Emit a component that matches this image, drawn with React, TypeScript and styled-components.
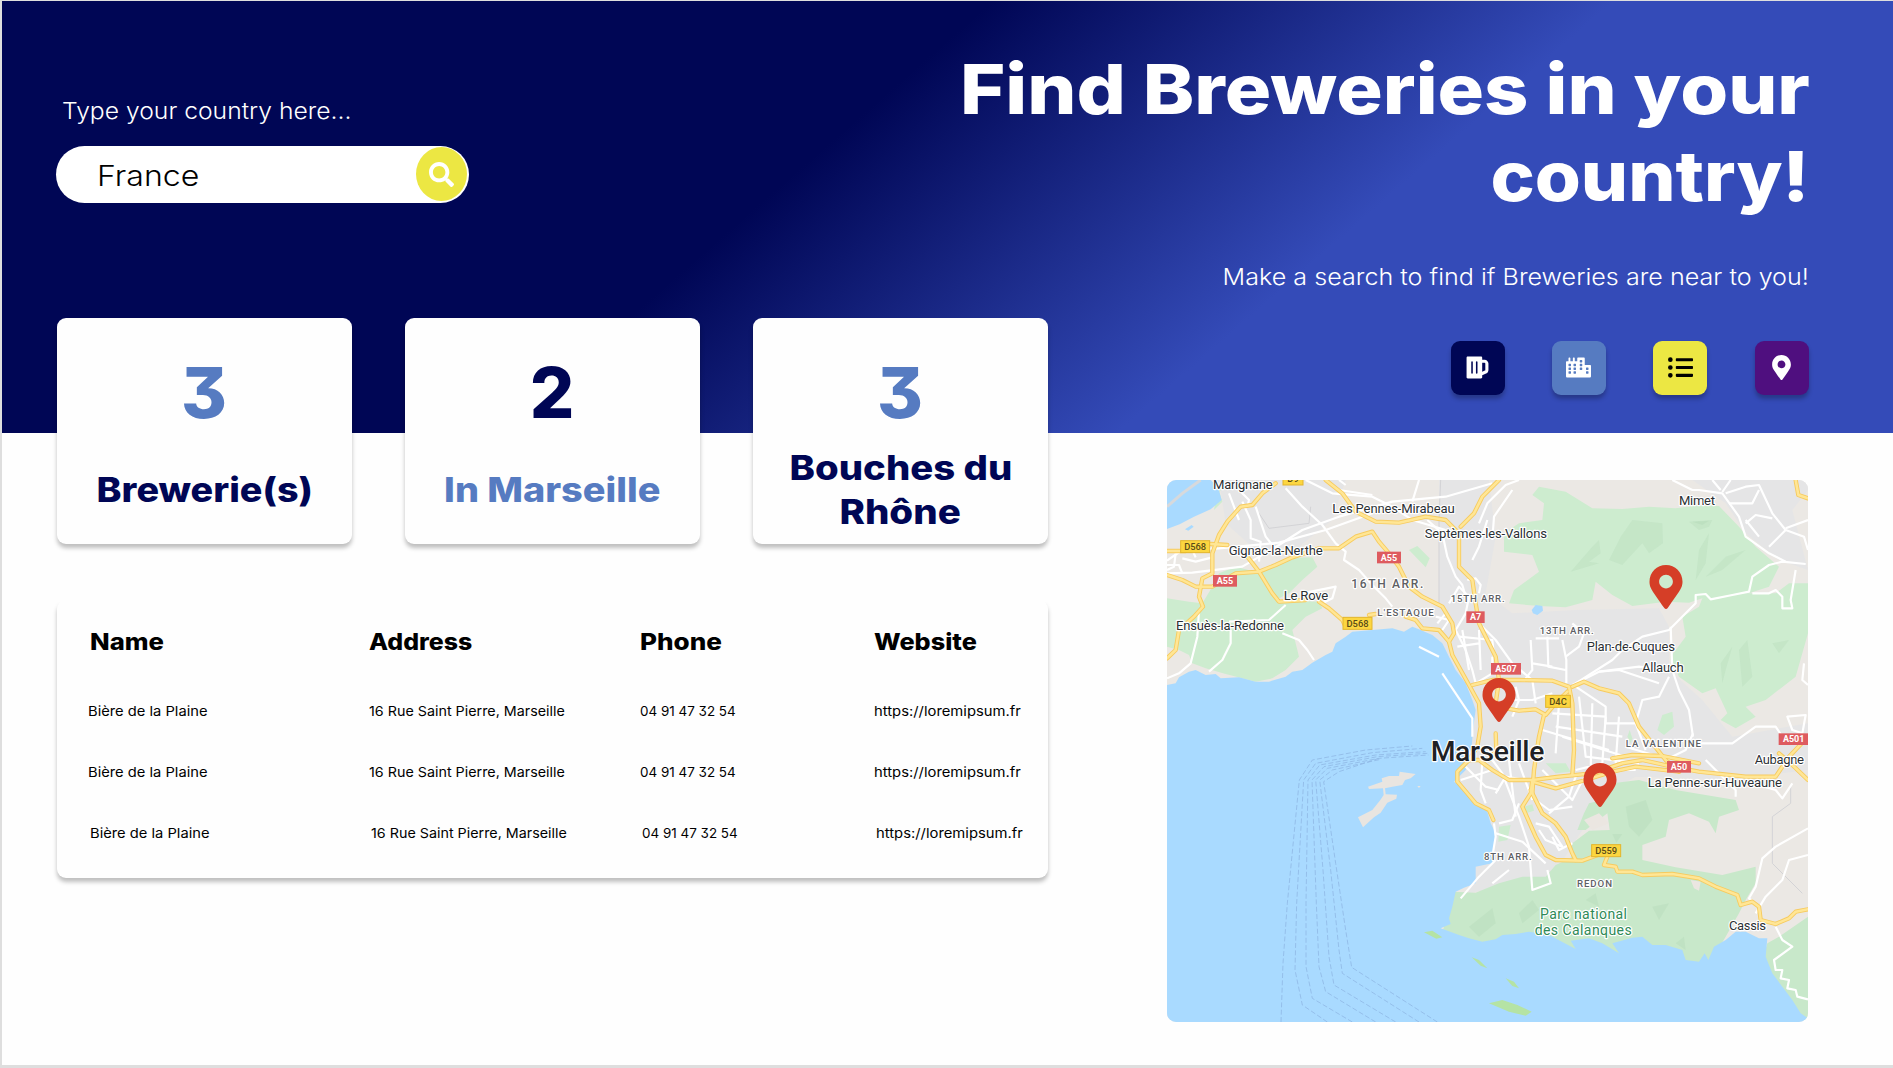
import React from "react";
import styled, { createGlobalStyle } from "styled-components";
import { FaBeer, FaCity, FaListUl, FaMapMarkerAlt, FaSearch } from "react-icons/fa";

const navy = "#000655";
const blue = "#567bc1";
const yellow = "#ece743";
const purple = "#4f0f7f";

const GlobalStyle = createGlobalStyle`
  *, *::before, *::after { box-sizing: border-box; }
  body {
    margin: 0;
    background: #fefefe;
    font-family: Inter, "Open Sans", sans-serif;
    font-feature-settings: "cv09";
    overflow: hidden;
  }
`;

const Page = styled.div`
  display: flex;
  flex-direction: column;
  height: 1068px;
  border: solid #dedede;
  border-width: 1px 0 3px 2px;
`;

const Hero = styled.header`
  display: flex;
  justify-content: space-between;
  flex: none;
  height: 432px;
  padding: 0 84.5px 0 54px;
  color: #fff;
  background: linear-gradient(139deg, ${navy} 41.5%, #344bb8 67.5%);
`;

const Wide = styled.span<{ $stretch: number; $origin?: string }>`
  display: inline-block;
  transform: scaleX(${(p) => p.$stretch});
  transform-origin: ${(p) => p.$origin ?? "left"} center;
  white-space: nowrap;
`;

const SearchForm = styled.form`
  display: flex;
  flex-direction: column;
  width: 413px;
  padding-top: 95px;
`;

const SearchLabel = styled.label`
  padding-left: 6px;
  font-size: 23px;
  font-weight: 300;
  line-height: 30px;
`;

const SearchBox = styled.div`
  display: flex;
  align-items: center;
  justify-content: space-between;
  height: 57px;
  margin-top: 19.5px;
  padding: 0 2px 0 40.5px;
  border-radius: 29px;
  background: #fff;
`;

const SearchInput = styled.input`
  width: 250px;
  padding: 3px 0 0;
  border: 0;
  outline: 0;
  background: none;
  color: #000;
  font: 300 28.5px Inter, sans-serif;
  transform: scaleX(1.125);
  transform-origin: left center;
`;

const SearchButton = styled.button`
  display: grid;
  place-items: center;
  width: 51px;
  height: 54px;
  padding: 0;
  border: 0;
  border-radius: 50%;
  background: ${yellow};
  color: #fff;
  font-size: 25px;
`;

const Intro = styled.div`
  display: flex;
  flex-direction: column;
  align-items: flex-end;
  text-align: right;
`;

const Title = styled.h1`
  display: flex;
  flex-direction: column;
  align-items: flex-end;
  margin: 45px -1px 0 0;
  font-size: 69px;
  font-weight: 800;
  line-height: 87px;
`;

const Tagline = styled.p`
  margin: 42px 0 0;
  font-size: 23px;
  font-weight: 300;
  line-height: 30px;
`;

const Shortcuts = styled.nav`
  display: flex;
  gap: 47.3px;
  margin-top: 48.5px;
`;

const Shortcut = styled.button<{ $bg: string; $fg?: string }>`
  display: grid;
  place-items: center;
  width: 54px;
  height: 54px;
  padding: 0;
  border: 0;
  border-radius: 9px;
  background: ${(p) => p.$bg};
  color: ${(p) => p.$fg ?? "#fff"};
  font-size: 25px;
  box-shadow: 0 4px 4px rgba(0, 0, 0, 0.25);
`;

const Content = styled.main`
  display: flex;
  justify-content: space-between;
  padding: 0 85px 0 55px;
`;

const Results = styled.section`
  width: 991px;
  margin-top: -115px;
`;

const Stats = styled.div`
  display: grid;
  grid-template-columns: repeat(3, 295px);
  justify-content: space-between;
`;

const StatCard = styled.article`
  display: flex;
  flex-direction: column;
  align-items: center;
  height: 226px;
  padding-top: 32px;
  border-radius: 9px;
  background: #fefefe;
  box-shadow: 0 4px 4px rgba(0, 0, 0, 0.25);
`;

const StatValue = styled.div<{ $color: string }>`
  margin-right: 1px;
  color: ${(p) => p.$color};
  font-size: 70px;
  font-weight: 800;
  line-height: 85px;
`;

const StatLabel = styled.div<{ $color: string }>`
  display: flex;
  flex: 1;
  flex-direction: column;
  align-items: center;
  justify-content: center;
  color: ${(p) => p.$color};
  font-size: 33.7px;
  font-weight: 800;
  line-height: 43.5px;
`;

const TableCard = styled.div`
  height: 278px;
  margin-top: 56px;
  padding: 27px 0 0 30.5px;
  border-radius: 9px;
  background: #fefefe;
  box-shadow: 0 4px 4px rgba(0, 0, 0, 0.25);
  clip-path: inset(2px -10px -10px -10px);
`;

const HeadRow = styled.div`
  display: grid;
  grid-template-columns: 281px 271px 234px 1fr;
  margin-bottom: 23px;
`;

const HeadCell = styled.div<{ $shift?: number }>`
  padding-left: ${(p) => p.$shift ?? 0}px;
  font-size: 23px;
  font-weight: 800;
  line-height: 30px;
`;

const Row = styled.div<{ $indent?: boolean }>`
  display: grid;
  grid-template-columns: 281px 271px 234px 1fr;
  align-items: center;
  height: 61.2px;
  padding-left: ${(p) => (p.$indent ? 2.7 : 0)}px;
`;

const Cell = styled.div`
  font-size: 13.5px;
  line-height: 20px;
`;

const MapPanel = styled.section`
  position: relative;
  width: 641px;
  height: 542px;
  margin-top: 47px;
  overflow: hidden;
  border-radius: 9px;
`;

const MapDrawing = styled.svg`
  display: block;
  width: 100%;
  height: 100%;
  font-family: Roboto, sans-serif;
`;

const Pin = styled(FaMapMarkerAlt)<{ $x: number; $y: number }>`
  position: absolute;
  left: ${(p) => p.$x - 22}px;
  top: ${(p) => p.$y}px;
  width: 44px;
  height: 44px;
  color: #d53e27;
`;

const brewery = {
  name: "Bière de la Plaine",
  address: "16 Rue Saint Pierre, Marseille",
  phone: "04 91 47 32 54",
  website: "https://loremipsum.fr",
};
const breweries = [brewery, brewery, brewery];

const sea =
  "M24 645 50 640 60 622 90 605 110 600 140 615 170 612 185 625 240 622 290 635 330 635 380 620 400 605 430 600 460 578 500 555 520 545 530 520 560 500 580 485 640 480 700 475 735 485 760 470 780 478 820 495 850 520 870 560 890 600 920 640 940 690 950 720 943 770 938 830 925 870 920 900 885 935 905 950 940 985 985 1025 995 1060 1010 1090 1005 1130 1002 1165 1000 1180 960 1188 950 1190 950 1240 915 1253 890 1265 880 1310 870 1345 875 1362 845 1375 900 1395 930 1405 970 1415 1010 1408 1030 1395 1070 1392 1110 1385 1170 1395 1250 1437 1235 1412 1290 1405 1330 1420 1380 1450 1360 1420 1420 1403 1450 1400 1480 1425 1520 1425 1570 1440 1580 1470 1620 1475 1637 1450 1648 1470 1665 1430 1700 1410 1730 1385 1760 1385 1800 1405 1825 1405 1820 1460 1840 1510 1870 1550 1900 1590 1925 1630 1947 1645V1656H24Z";

const parks = [
  "M24 385 90 395 130 400 160 350 180 310 230 290 290 305 330 290 380 265 460 262 475 290 430 330 390 370 350 390 480 395 490 415 440 440 400 480 410 520 420 560 380 600 340 625 290 635 200 612 140 595 100 580 90 555 60 540 24 530Z",
  "M1140 50 1220 65 1300 115 1390 117 1470 110 1550 115 1630 105 1680 108 1740 170 1790 230 1860 290 1830 350 1770 370 1690 385 1630 385 1590 398 1520 395 1420 408 1360 375 1310 335 1300 390 1220 412 1140 408 1050 400 1065 360 1140 305 1120 255 1035 245 1035 190 1080 160 1150 150 1155 100 1120 75Z",
  "M1947 340V490L1910 620 1820 690 1760 710 1790 740 1730 775 1685 750 1705 730 1670 655 1630 670 1560 620 1535 560 1580 500 1570 440 1620 410 1630 385 1730 370 1850 370 1890 340Z",
  "M1510 735 1540 725 1545 770 1515 795 1495 780Z",
  "M1405 800 1412 780 1420 805 1415 820Z",
  "M750 240 775 228 812 265 800 292Z",
  "M1160 880 1220 880 1235 905 1190 910Z",
  "M1020 1070 1055 1065 1045 1110 1018 1115Z",
  "M1095 1010 1120 1003 1125 1022 1100 1030Z",
  "M205 30 180 62 190 95 165 120 172 80Z",
];

const calanques = [
  "M850 1390 880 1265 950 1268 1020 1240 1090 1220 1160 1220 1190 1185 1235 1165 1240 1120 1290 1082 1352 1080 1345 1030 1280 1080 1255 1080 1275 1030 1290 1000 1330 990 1360 940 1440 930 1550 960 1730 990 1740 1020 1680 1040 1670 1090 1650 1055 1590 1030 1530 1050 1520 1100 1450 1125 1450 1170 1550 1192 1690 1215 1790 1190 1790 1240 1760 1290 1740 1330 1700 1400 1640 1500 1400 1500 850 1440Z",
  "M1947 1340 1860 1400 1825 1420 1810 1470 1850 1620 1947 1656Z",
];

const shades = [
  "M1235 305 1300 230 1320 210 1325 250 1290 275 1320 280Z",
  "M1385 200 1420 150 1510 160 1512 220 1470 250 1450 220 1390 285 1350 270Z",
  "M1590 155 1660 150 1650 170 1620 180Z",
  "M1600 155 1650 152 1630 165Z",
  "M1610 330 1620 240 1650 190 1640 280Z",
  "M1640 320 1700 260 1760 240 1690 300Z",
  "M1685 580 1720 530 1700 600 1690 640Z",
  "M1740 540 1765 510 1780 620 1750 650Z",
  "M1840 520 1890 510 1860 550Z",
  "M1400 1010 1460 990 1480 1050 1440 1100 1410 1070Z",
  "M1360 1092 1390 1092 1372 1118Z",
  "M930 1370 1000 1315 1010 1360 960 1400Z",
  "M1080 1330 1120 1290 1140 1320 1090 1360Z",
  "M1480 1310 1530 1300 1500 1350Z",
  "M1280 1290 1310 1270 1320 1310Z",
  "M1550 1420 1575 1400 1580 1440Z",
];

const minorRoads = [
  "M24 272 70 240 180 235 360 218 500 180 640 130",
  "M24 310 100 308 250 290 360 225 430 180 540 140 700 95 860 80 930 60 1000 40",
  "M24 285 60 285 70 310M50 250 45 290 24 300M70 265 110 275 160 262M100 240 110 262",
  "M250 95 275 150 275 205 305 215 300 275",
  "M290 110 320 200 340 225",
  "M210 70 225 110 240 150M240 60 270 90 265 110",
  "M380 55 430 110 490 165 530 220 560 245 555 270 600 300 640 345 680 385 700 410",
  "M440 30 520 70 640 80 700 110 760 150 860 180",
  "M760 95 780 30M540 60 640 75M560 45 540 30",
  "M805 150 850 190 865 260 890 320 910 345 920 380",
  "M120 420 115 500 95 580 60 610 24 625",
  "M215 480 215 520 190 570 150 605",
  "M380 405 330 450 210 455M370 490 420 510 445 540 465 570",
  "M430 370 530 350 520 385 490 400",
  "M960 160 985 100 1040 45 1080 30",
  "M940 270 960 230 985 150",
  "M925 330 950 325 965 345 960 370",
  "M870 400 900 350 930 380 920 430 890 480 920 540",
  "M830 440 870 450 850 480M835 460 860 430",
  "M900 500 1000 510 1005 560M920 540 940 600 950 640 1000 610 1000 560",
  "M910 480 930 600M960 480 965 600M895 530 960 520",
  "M970 470 1010 510 1060 580 1120 630 1130 700",
  "M1115 510 1120 600 1100 625M1165 500 1168 590 1220 600M1210 510 1222 570 1222 640M1130 505 1200 505",
  "M1220 560 1260 530 1275 490 1240 460M1120 580 1180 590",
  "M1240 645 1320 605 1440 590 1530 600",
  "M1250 640 1360 570 1390 540 1450 500 1530 480 1580 430 1610 400 1610 375 1640 372 1655 388 1720 375 1770 365 1780 320 1830 285 1870 275 1940 282",
  "M1780 370 1830 370 1850 360 1870 380 1870 415 1900 415 1895 390 1910 300",
  "M1535 470 1540 600 1560 660 1590 720 1602 800",
  "M1530 620 1500 680 1450 690 1430 760M1320 605 1380 600 1500 640",
  "M1540 30 1600 60 1620 60 1690 70 1740 140 1760 200 1830 250 1880 275",
  "M1700 70 1760 50 1800 45 1840 130 1880 180 1935 200 1947 240",
  "M1760 160 1790 135 1840 145M1880 180 1830 230M1760 150 1800 200M1880 175 1947 150",
  "M1660 30 1685 60M1690 66 1715 30M1710 100 1780 100 1800 60",
  "M1000 210 1005 140 1060 60",
  "M1050 690 1120 690 1180 670M1060 740 1080 690 1070 650",
  "M1250 650 1340 710 1340 760 1430 760 1460 840",
  "M1180 730 1340 740M1190 770 1390 800M1200 700 1190 850M1300 700 1295 900M1340 740 1330 880 1250 900",
  "M1150 780 1350 840M1380 740 1370 880M1210 800 1400 860M1260 680 1280 860 1440 880",
  "M1000 870 1030 910 1080 1040 1110 1130 1120 1260 1175 1240 1165 1200",
  "M970 870 965 960 980 1000M905 930 1000 900M920 890 980 950 1020 960",
  "M1010 970 1040 920 1100 930M1020 1060 1060 1050 1080 1000M1010 1090 1090 1115 1160 1180",
  "M1080 880 1120 990M1050 870 1070 1040M1150 900 1240 990 1260 950 1290 900",
  "M1240 1010 1170 1020 1130 990M1170 1030 1230 980 1250 920M1130 1060 1170 1070 1210 1130 1160 1110 1140 1080",
  "M1240 1120 1200 1140 1180 1100M1260 940 1300 900 1430 900M1400 830 1500 860",
  "M1010 1170 960 1220 905 1285M1005 1060 1010 1100 1000 1160M1000 1240 1050 1200",
  "M1602 790 1580 840 1520 870M1600 820 1720 820 1790 770 1850 770 1870 800",
  "M1885 740 1940 735 1930 790 1900 780ZM1935 580 1930 630 1947 645",
  "M1640 870 1700 930 1730 960 1730 980M1780 940 1850 960 1870 985 1900 940",
  "M1947 1075 1850 1130 1810 1165 1790 1250 1770 1285 1800 1310M1947 1155 1890 1170 1870 1230 1820 1280 1790 1330",
  "M1850 1370 1870 1410 1900 1430 1845 1470 1850 1500 1870 1500 1865 1525 1890 1530 1885 1555 1910 1560 1915 1580 1947 1588",
  "M780 530 840 560M850 610 940 745 940 800",
];

const mainRoads = [
  "M24 243 80 243M155 222 205 225",
  "M350 40 310 70 280 105 245 110 205 155 180 195 160 250 160 310 130 325 120 380 132 410 105 440 60 480 50 540 24 565",
  "M24 315 70 330 110 350 160 350 230 310 300 305 350 285 400 262 480 235 540 235 590 200 640 185 660 215 690 250 720 290 750 350 790 380 850 410 880 460 885 490 870 515 880 555 905 600 930 645 960 700 965 770 955 830 930 870",
  "M265 260 300 305 340 370 360 395 440 390M480 395 510 415 550 450 560 470M630 435 650 432",
  "M500 30 550 70 590 125 650 155 720 158 800 140 860 150 900 190 900 290 940 330 950 400 960 460 985 510 1010 560 1020 630 1010 700",
  "M1020 30 970 80 945 130 905 170",
  "M740 440 770 450 790 475 840 480 870 515",
  "M940 645 1000 630 1080 630 1180 632 1230 650 1240 700 1245 840 1240 915",
  "M1240 650 1275 635 1320 655 1380 670 1410 700 1440 770 1480 820 1520 870 1560 905",
  "M1040 715 1080 722 1130 718 1160 735 1190 700 1225 665M1155 735 1140 800 1125 900 1120 970",
  "M1010 790 1012 840 990 870",
  "M930 870 895 905 895 935 925 970 950 1000 990 1020 1003 1050",
  "M930 870 960 870 1000 900 1050 930 1120 930 1200 920 1300 910 1390 880 1450 870 1540 890 1620 905 1760 920 1850 920 1890 860 1947 800",
  "M1120 935 1190 955 1280 930 1360 905 1430 890 1560 905",
  "M1360 865 1420 855 1510 858 1620 880M1860 850 1900 885 1947 930",
  "M1120 930 1115 970 1090 1010 1130 1100 1160 1155 1190 1170 1270 1172 1330 1150",
  "M1115 960 1150 1030 1190 1060 1220 1100 1240 1150 1250 1170",
  "M1345 1160 1335 1185 1370 1190 1375 1205 1420 1205 1450 1215 1540 1212 1620 1225 1670 1250 1735 1275 1745 1305 1780 1295 1800 1310 1805 1350 1850 1362 1890 1345 1910 1325 1947 1318",
  "M1910 30 1918 75 1947 85",
];

const ferryRoutes = [
  "M366 1656 372 1480 385 1300 421 930 460 870 620 840 760 828",
  "M505 1656 430 1605 408 1500 413 1300 434 930 470 880 640 848 790 835",
  "M580 1656 460 1585 441 1490 441 1300 447 930 482 885 650 855 800 845",
  "M650 1656 500 1565 480 1490 472 1300 459 930 495 890 655 860 805 850",
  "M710 1656 525 1545 510 1460 492 1200 470 930 505 895 660 865 808 855",
  "M780 1656 550 1510 540 1440 515 1200 482 930 520 900 665 868",
  "M835 1656 578 1492 560 1380 530 1180 494 935 540 905 660 865",
];

type Place = [text: string, x: number, y: number, width: number, size?: number];

const towns: Place[] = [
  ["Marignane", 162, 58, 179],
  ["Les Pennes-Mirabeau", 520, 129, 367],
  ["Septèmes-les-Vallons", 797, 204, 367],
  ["Gignac-la-Nerthe", 209, 254, 282],
  ["Le Rove", 374, 389, 134],
  ["Ensuès-la-Redonne", 51, 481, 324],
  ["Mimet", 1560, 105, 108],
  ["Plan-de-Cuques", 1283, 542, 265],
  ["Allauch", 1449, 605, 125],
  ["Aubagne", 1787, 882, 148],
  ["La Penne-sur-Huveaune", 1466, 950, 403],
  ["Cassis", 1710, 1379, 111],
];

const districts: Place[] = [
  ["16TH ARR.", 577, 353, 216, 36],
  ["15TH ARR.", 875, 395, 162],
  ["L'ESTAQUE", 655, 437, 169],
  ["13TH ARR.", 1142, 493, 162],
  ["LA VALENTINE", 1400, 832, 226],
  ["8TH ARR.", 975, 1170, 143],
  ["REDON", 1254, 1250, 105],
];

type Sign = [text: string, x: number, y: number, width: number];

const redSigns: Sign[] = [
  ["A55", 162, 315, 72],
  ["A55", 654, 245, 72],
  ["A7", 922, 424, 55],
  ["A507", 996, 579, 90],
  ["A501", 1859, 790, 90],
  ["A50", 1524, 873, 72],
];

const yellowSigns: Sign[] = [
  ["D9", 371, 8, 62],
  ["D568", 64, 211, 89],
  ["D568", 551, 441, 89],
  ["D4C", 1159, 675, 76],
  ["D559", 1297, 1123, 89],
];

const Halo = styled.text`
  paint-order: stroke;
  stroke: #fff;
  stroke-width: 7px;
  stroke-linejoin: round;
`;

function MarseilleMap() {
  return (
    <MapDrawing viewBox="24 30 1923 1626" preserveAspectRatio="none">
      <rect x="24" y="30" width="1923" height="1626" fill="#ebe8e4" />
      <path
        fill="#e5e5e6"
        d="M180 30H560L520 150 420 230 290 240 200 160ZM840 30H990L1010 200 980 370 1060 430 1250 420 1500 415 1530 470 1530 600 1630 690 1720 800 1947 760V900L1700 930 1430 920 1320 980 1270 1080 1180 1220 930 1270 850 520 760 450 840 400Z"
      />
      <path fill="#e5e5e6" d="M1600 30H1947V60L1900 120 1947 300 1860 270 1760 190 1700 100Z" />
      {parks.map((d) => (
        <path key={d} d={d} fill="#cdeccf" />
      ))}
      {calanques.map((d) => (
        <path key={d} d={d} fill="#c8e8ca" />
      ))}
      {shades.map((d) => (
        <path key={d} d={d} fill="#7fae86" opacity="0.1" />
      ))}
      <path fill="#ebe6e1" d="M1595 1230 1625 1235 1620 1262 1605 1255ZM1275 1050 1320 1030 1350 1060 1300 1080Z" />
      <path d={sea} fill="#a9daff" />
      <path
        fill="#a9daff"
        d="M24 30H155L178 55 188 90 155 118 105 140 62 163 24 177ZM78 178 98 165 104 170 88 182ZM1118 420 1130 405 1150 408 1152 422 1135 435 1122 430Z"
      />
      <path d="M24 110 70 70 125 30" fill="none" stroke="#d7d9dc" strokeWidth="9" />
      <path
        fill="#e9e5e0"
        d="M627 950 670 935 668 925 690 918 720 918 722 905 770 912 755 925 738 930 730 945 700 950 678 955 680 973 714 974 712 986 685 998 665 1028 645 1042 612 1072 597 1042 640 1020 664 990 674 975 672 955 630 957ZM775 948 785 948 780 954Z"
      />
      <path
        fill="#b5e3a4"
        d="M795 1387 820 1382 850 1402 832 1406ZM938 1462 960 1470 985 1495 965 1487ZM1040 1525 1065 1535 1080 1555 1060 1548ZM990 1600 1030 1590 1075 1605 1118 1625 1100 1637 1050 1625Z"
      />
      <g fill="none" stroke="#8fb8e4" strokeWidth="2.4" strokeDasharray="15 7">
        {ferryRoutes.map((d) => (
          <path key={d} d={d} />
        ))}
      </g>
      <path
        d="M845 30 840 150 840 400M300 130 330 175 450 160 455 110M1895 950V1000L1840 1040V1180L1930 1270"
        fill="none"
        stroke="#d3d3d6"
        strokeWidth="3"
      />
      <g fill="none" stroke="#fff" strokeWidth="6.5" strokeLinejoin="round">
        {minorRoads.map((d) => (
          <path key={d} d={d} />
        ))}
      </g>
      <g fill="none" strokeLinejoin="round" strokeLinecap="round">
        {mainRoads.map((d) => (
          <path key={d} d={d} stroke="#f7cb5f" strokeWidth="13" />
        ))}
        {mainRoads.map((d) => (
          <path key={d} d={d} stroke="#ffe695" strokeWidth="7.5" />
        ))}
      </g>
      {towns.map(([text, x, y, width]) => (
        <Halo key={text} x={x} y={y} textLength={width} fontSize="39.5" fill="#2b2f33">
          {text}
        </Halo>
      ))}
      {districts.map(([text, x, y, width, size]) => (
        <Halo key={text} x={x} y={y} textLength={width} fontSize={size ?? 29} fontWeight="500" fill="#5d6064">
          {text}
        </Halo>
      ))}
      <Halo x="815" y="872" textLength="341" fontSize="85" fontWeight="500" fill="#202124">
        Marseille
      </Halo>
      <Halo x="1143" y="1348" textLength="261" fontSize="42" fill="#2f8a57">
        Parc national
      </Halo>
      <Halo x="1127" y="1394" textLength="291" fontSize="42" fill="#2f8a57">
        des Calanques
      </Halo>
      {redSigns.map(([text, x, y, width]) => (
        <g key={text + x}>
          <rect x={x} y={y} width={width} height="35" fill="#de5b5f" />
          <text x={x + width / 2} y={y + 27} textAnchor="middle" fontSize="27" fontWeight="700" fill="#fff">
            {text}
          </text>
        </g>
      ))}
      {yellowSigns.map(([text, x, y, width]) => (
        <g key={text + x}>
          <rect x={x + 1} y={y + 1} width={width - 2} height="36" fill="#fcd640" stroke="#e3b52c" strokeWidth="3" />
          <text x={x + width / 2} y={y + 29} textAnchor="middle" fontSize="28" fontWeight="500" fill="#574a17">
            {text}
          </text>
        </g>
      ))}
    </MapDrawing>
  );
}

export default function App() {
  return (
    <>
      <GlobalStyle />
      <Page>
        <Hero>
          <SearchForm>
            <SearchLabel htmlFor="country">
              <Wide $stretch={1.073}>Type your country here...</Wide>
            </SearchLabel>
            <SearchBox>
              <SearchInput id="country" defaultValue="France" />
              <SearchButton type="button" aria-label="Search">
                <FaSearch />
              </SearchButton>
            </SearchBox>
          </SearchForm>
          <Intro>
            <Title>
              <Wide $stretch={1.123} $origin="right">Find Breweries in your</Wide>
              <Wide $stretch={1.08} $origin="right">country!</Wide>
            </Title>
            <Tagline>
              <Wide $stretch={1.092} $origin="right">Make a search to find if Breweries are near to you!</Wide>
            </Tagline>
            <Shortcuts>
              <Shortcut $bg={navy} aria-label="Breweries">
                <FaBeer />
              </Shortcut>
              <Shortcut $bg={blue} aria-label="Cities">
                <FaCity />
              </Shortcut>
              <Shortcut $bg={yellow} $fg="#000" aria-label="List">
                <FaListUl />
              </Shortcut>
              <Shortcut $bg={purple} aria-label="Map">
                <FaMapMarkerAlt />
              </Shortcut>
            </Shortcuts>
          </Intro>
        </Hero>
        <Content>
          <Results>
            <Stats>
              <StatCard>
                <StatValue $color={blue}>3</StatValue>
                <StatLabel $color={navy}>
                  <Wide $stretch={1.118} $origin="center">Brewerie(s)</Wide>
                </StatLabel>
              </StatCard>
              <StatCard>
                <StatValue $color={navy}>2</StatValue>
                <StatLabel $color={blue}>
                  <Wide $stretch={1.124} $origin="center">In Marseille</Wide>
                </StatLabel>
              </StatCard>
              <StatCard>
                <StatValue $color={blue}>3</StatValue>
                <StatLabel $color={navy}>
                  <Wide $stretch={1.137} $origin="center">Bouches du</Wide>
                  <Wide $stretch={1.143} $origin="center">Rhône</Wide>
                </StatLabel>
              </StatCard>
            </Stats>
            <TableCard>
              <HeadRow>
                <HeadCell $shift={2.5}>
                  <Wide $stretch={1.115}>Name</Wide>
                </HeadCell>
                <HeadCell>
                  <Wide $stretch={1.081}>Address</Wide>
                </HeadCell>
                <HeadCell>
                  <Wide $stretch={1.133}>Phone</Wide>
                </HeadCell>
                <HeadCell>
                  <Wide $stretch={1.097}>Website</Wide>
                </HeadCell>
              </HeadRow>
              {breweries.map((b, i) => (
                <Row key={i} $indent={i === 2}>
                  <Cell>
                    <Wide $stretch={1.09}>{b.name}</Wide>
                  </Cell>
                  <Cell>
                    <Wide $stretch={1.06}>{b.address}</Wide>
                  </Cell>
                  <Cell>
                    <Wide $stretch={0.995}>{b.phone}</Wide>
                  </Cell>
                  <Cell>
                    <Wide $stretch={1.097}>{b.website}</Wide>
                  </Cell>
                </Row>
              ))}
            </TableCard>
          </Results>
          <MapPanel>
            <MarseilleMap />
            <Pin $x={499} $y={85} />
            <Pin $x={331.5} $y={197.5} />
            <Pin $x={433} $y={283} />
          </MapPanel>
        </Content>
      </Page>
    </>
  );
}
